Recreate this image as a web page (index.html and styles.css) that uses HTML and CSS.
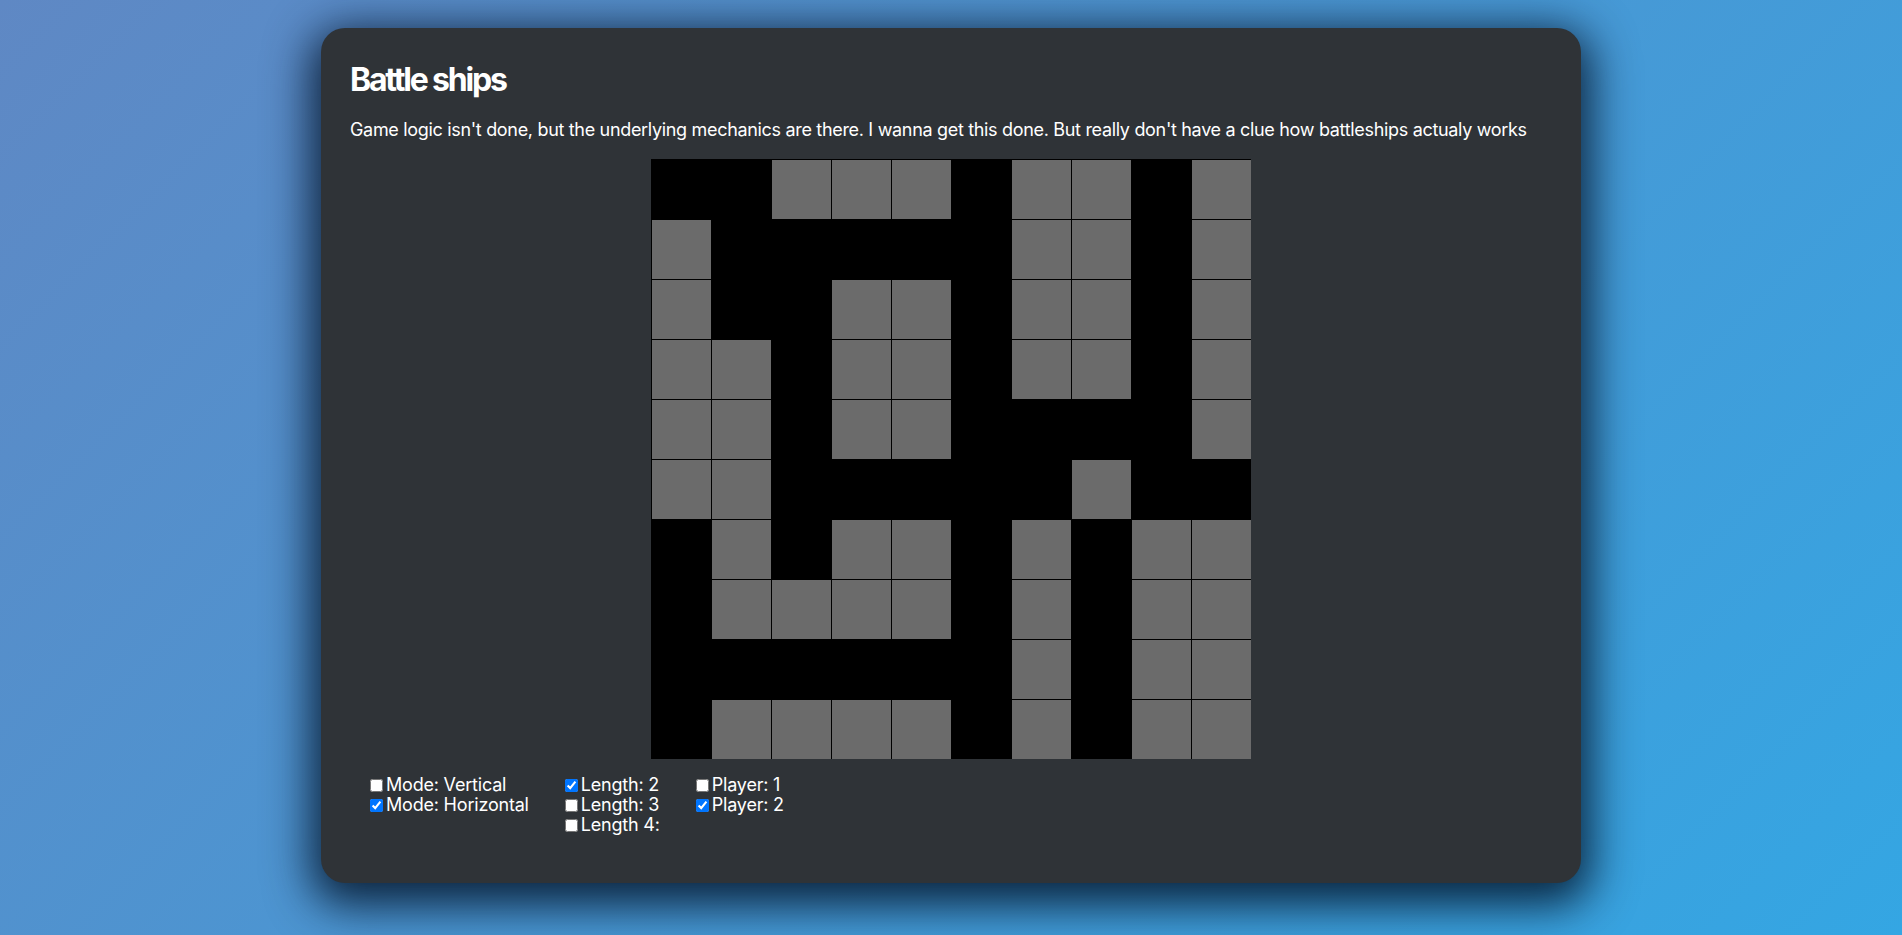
FILE: index.html
```html
<!DOCTYPE html>
<html lang="en">
<head>
<meta charset="utf-8">
<title>Battle ships</title>
<link rel="stylesheet" href="styles.css">
</head>
<body>
<main class="card">
  <h1 class="title">Battle ships</h1>
  <p class="lead">Game logic isn't done, but the underlying mechanics are there. I wanna get this done. But really don't have a clue how battleships actualy works</p>
  <div class="board">
    <div class="cell b"></div><div class="cell b"></div><div class="cell g"></div><div class="cell g"></div><div class="cell g"></div><div class="cell b"></div><div class="cell g"></div><div class="cell g"></div><div class="cell b"></div><div class="cell g"></div>
    <div class="cell g"></div><div class="cell b"></div><div class="cell b"></div><div class="cell b"></div><div class="cell b"></div><div class="cell b"></div><div class="cell g"></div><div class="cell g"></div><div class="cell b"></div><div class="cell g"></div>
    <div class="cell g"></div><div class="cell b"></div><div class="cell b"></div><div class="cell g"></div><div class="cell g"></div><div class="cell b"></div><div class="cell g"></div><div class="cell g"></div><div class="cell b"></div><div class="cell g"></div>
    <div class="cell g"></div><div class="cell g"></div><div class="cell b"></div><div class="cell g"></div><div class="cell g"></div><div class="cell b"></div><div class="cell g"></div><div class="cell g"></div><div class="cell b"></div><div class="cell g"></div>
    <div class="cell g"></div><div class="cell g"></div><div class="cell b"></div><div class="cell g"></div><div class="cell g"></div><div class="cell b"></div><div class="cell b"></div><div class="cell b"></div><div class="cell b"></div><div class="cell g"></div>
    <div class="cell g"></div><div class="cell g"></div><div class="cell b"></div><div class="cell b"></div><div class="cell b"></div><div class="cell b"></div><div class="cell b"></div><div class="cell g"></div><div class="cell b"></div><div class="cell b"></div>
    <div class="cell b"></div><div class="cell g"></div><div class="cell b"></div><div class="cell g"></div><div class="cell g"></div><div class="cell b"></div><div class="cell g"></div><div class="cell b"></div><div class="cell g"></div><div class="cell g"></div>
    <div class="cell b"></div><div class="cell g"></div><div class="cell g"></div><div class="cell g"></div><div class="cell g"></div><div class="cell b"></div><div class="cell g"></div><div class="cell b"></div><div class="cell g"></div><div class="cell g"></div>
    <div class="cell b"></div><div class="cell b"></div><div class="cell b"></div><div class="cell b"></div><div class="cell b"></div><div class="cell b"></div><div class="cell g"></div><div class="cell b"></div><div class="cell g"></div><div class="cell g"></div>
    <div class="cell b"></div><div class="cell g"></div><div class="cell g"></div><div class="cell g"></div><div class="cell g"></div><div class="cell b"></div><div class="cell g"></div><div class="cell b"></div><div class="cell g"></div><div class="cell g"></div>
  </div>
  <div class="controls">
    <div class="group">
      <label class="opt"><input type="checkbox">Mode: Vertical</label>
      <label class="opt"><input type="checkbox" checked>Mode: Horizontal</label>
    </div>
    <div class="group">
      <label class="opt"><input type="checkbox" checked>Length: 2</label>
      <label class="opt"><input type="checkbox">Length: 3</label>
      <label class="opt"><input type="checkbox">Length 4:</label>
    </div>
    <div class="group">
      <label class="opt"><input type="checkbox">Player: 1</label>
      <label class="opt"><input type="checkbox" checked>Player: 2</label>
    </div>
  </div>
</main>
</body>
</html>
```
FILE: styles.css
```css
html, body {
  margin: 0;
  padding: 0;
}
body {
  min-height: 935px;
  background: linear-gradient(135deg, #5f88c4 0%, #34a6e3 100%);
  font-family: Inter, "Noto Sans", sans-serif;
  color: #ffffff;
  padding-top: 28px;
  box-sizing: border-box;
}
.card {
  width: 1260px;
  height: 855px;
  margin: 0 auto;
  box-sizing: border-box;
  background: #2f3337;
  border-radius: 24px;
  padding: 32px 29px;
  box-shadow: 0 12px 45px 10px rgba(0, 15, 35, 0.85);
}
.title {
  margin: 0 0 18px;
  font-size: 32px;
  line-height: 40px;
  font-weight: 700;
  letter-spacing: -2.2px;
}
.lead {
  margin: 0 0 17px;
  font-size: 18px;
  line-height: 24px;
  font-weight: 400;
  letter-spacing: -0.32px;
}
.board {
  width: 600px;
  margin: 0 auto;
  display: grid;
  grid-template-columns: repeat(10, 60px);
  grid-auto-rows: 60px;
  background: #000;
}
.cell {
  box-sizing: border-box;
}
.cell.b {
  background: #000;
}
.cell.g {
  background: #6b6b6b;
  border-left: 1px solid #000;
  border-top: 1px solid #000;
}
.controls {
  display: flex;
  gap: 32px;
  margin-top: 16px;
  padding-left: 16px;
  font-size: 18px;
  letter-spacing: -0.2px;
}
.group {
  display: flex;
  flex-direction: column;
}
.opt {
  display: flex;
  align-items: center;
  height: 20px;
  line-height: 20px;
}
.opt input {
  width: 13px;
  height: 13px;
  margin: 0 3px 0 4px;
}
```
